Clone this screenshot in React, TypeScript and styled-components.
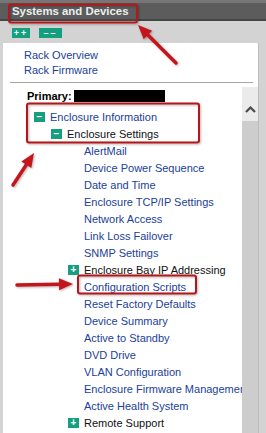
import React from "react";
import styled, { createGlobalStyle } from "styled-components";

const Global = createGlobalStyle`
  html, body { margin: 0; padding: 0; }
  body {
    width: 266px; height: 433px; overflow: hidden;
    background: #d3d3d3;
    font-family: "Liberation Sans", Arial, sans-serif;
  }
`;

const Page = styled.div`
  position: relative;
  width: 266px;
  height: 433px;
  overflow: hidden;
  display: flex;
  flex-direction: column;
  background: #d3d3d3;
`;

const Header = styled.div`
  height: 16px;
  border-top: 3px solid #767676;
  border-bottom: 2px solid #454545;
  background: #5c5c5c;
  display: flex;
  align-items: center;
  padding-left: 12px;
  color: #ededed;
  font-weight: bold;
  font-size: 11.4px;
`;

const Toolbar = styled.div`
  height: 22px;
  box-sizing: border-box;
  padding: 7px 0 0 12px;
  display: flex;
  gap: 9px;
  align-items: flex-start;
`;

const ToolButton = styled.div<{ $w: number }>`
  width: ${(p) => p.$w}px;
  height: 10px;
  background: #14a07f;
  color: #fff;
  font-size: 9px;
  font-weight: bold;
  line-height: 10px;
  text-align: center;
  letter-spacing: 2px;
`;

const Panel = styled.div`
  flex: 1;
  margin-left: 3px;
  width: 255px;
  background: #fff;
  border-right: 1px solid #bcbcbc;
  display: flex;
  flex-direction: column;
  min-height: 0;
`;

const TopLinks = styled.div`
  padding: 5px 0 0 21px;
  display: flex;
  flex-direction: column;
`;

const Link = styled.div`
  font-size: 11px;
  line-height: 15px;
  height: 15px;
  color: #21419a;
`;

const Separator = styled.div`
  height: 1px;
  background: #a6a6a6;
  margin: 4px 5px 0 7px;
`;

const TreeArea = styled.div`
  margin-top: 4px;
  flex: 1;
  display: flex;
  min-height: 0;
`;

const Tree = styled.div`
  flex: 1;
  overflow: hidden;
  white-space: nowrap;
  padding-left: 24px;
`;

const PrimaryRow = styled.div`
  height: 17px;
  display: flex;
  align-items: center;
  font-size: 11px;
  font-weight: bold;
  color: #000;
  margin-bottom: 4px;
`;

const Redacted = styled.span`
  display: inline-block;
  width: 91px;
  height: 12px;
  background: #000;
  margin-left: 2px;
`;

const Row = styled.div<{ $level: number }>`
  height: 17px;
  display: flex;
  align-items: center;
  padding-left: ${(p) => 7 + p.$level * 17}px;
  font-size: 11px;
`;

const Toggle = styled.span`
  width: 11px;
  height: 10px;
  background: #14a07f;
  color: #fff;
  font-size: 10px;
  font-weight: bold;
  line-height: 10px;
  text-align: center;
  margin-right: 5px;
  flex: none;
`;

const Spacer = styled.span`
  width: 16px;
  flex: none;
`;

const Label = styled.span<{ $dark?: boolean }>`
  color: ${(p) => (p.$dark ? "#111" : "#21419a")};
`;

const Scrollbar = styled.div`
  width: 16px;
  display: flex;
  flex-direction: column;
`;

const ScrollButton = styled.div`
  height: 34px;
  background: #ebebeb;
  display: flex;
  justify-content: center;
  padding-top: 19px;
  box-sizing: border-box;
`;

const ScrollThumb = styled.div`
  flex: 1;
  background: #cdcdcd;
`;

const Annotations = styled.svg`
  position: absolute;
  left: 0;
  top: 0;
  pointer-events: none;
`;

type Item = { label: string; level: number; toggle?: "+" | "−"; dark?: boolean };

const items: Item[] = [
  { label: "Enclosure Information", level: 0, toggle: "−" },
  { label: "Enclosure Settings", level: 1, toggle: "−", dark: true },
  { label: "AlertMail", level: 2 },
  { label: "Device Power Sequence", level: 2 },
  { label: "Date and Time", level: 2 },
  { label: "Enclosure TCP/IP Settings", level: 2 },
  { label: "Network Access", level: 2 },
  { label: "Link Loss Failover", level: 2 },
  { label: "SNMP Settings", level: 2 },
  { label: "Enclosure Bay IP Addressing", level: 2, toggle: "+", dark: true },
  { label: "Configuration Scripts", level: 2 },
  { label: "Reset Factory Defaults", level: 2 },
  { label: "Device Summary", level: 2 },
  { label: "Active to Standby", level: 2 },
  { label: "DVD Drive", level: 2 },
  { label: "VLAN Configuration", level: 2 },
  { label: "Enclosure Firmware Management", level: 2 },
  { label: "Active Health System", level: 2 },
  { label: "Remote Support", level: 2, toggle: "+", dark: true },
];

function Arrow({ x1, y1, x2, y2 }: { x1: number; y1: number; x2: number; y2: number }) {
  const dx = x2 - x1;
  const dy = y2 - y1;
  const len = Math.hypot(dx, dy);
  const ux = dx / len;
  const uy = dy / len;
  const hl = 14;
  const hw = 6;
  const bx = x2 - ux * hl;
  const by = y2 - uy * hl;
  const px = -uy;
  const py = ux;
  return (
    <g>
      <line x1={x1} y1={y1} x2={bx} y2={by} stroke="#c3161c" strokeWidth={3.5} strokeLinecap="round" />
      <polygon
        points={`${x2},${y2} ${bx + px * hw},${by + py * hw} ${bx - px * hw},${by - py * hw}`}
        fill="#c3161c"
      />
    </g>
  );
}

export default function App() {
  return (
    <>
      <Global />
      <Page>
        <Header>Systems and Devices</Header>
        <Toolbar>
          <ToolButton $w={18}>++</ToolButton>
          <ToolButton $w={23}>––</ToolButton>
        </Toolbar>
        <Panel>
          <TopLinks>
            <Link>Rack Overview</Link>
            <Link>Rack Firmware</Link>
          </TopLinks>
          <Separator />
          <TreeArea>
            <Tree>
              <PrimaryRow>
                Primary:<Redacted />
              </PrimaryRow>
              {items.map((it) => (
                <Row key={it.label} $level={it.level + (it.toggle ? 0 : 0)}>
                  {it.toggle ? <Toggle>{it.toggle === "+" ? "+" : "−"}</Toggle> : <Spacer />}
                  <Label $dark={it.dark}>{it.label}</Label>
                </Row>
              ))}
            </Tree>
            <Scrollbar>
              <ScrollButton>
                <svg width="11" height="7" viewBox="0 0 11 7">
                  <path d="M1 6 L5.5 1.5 L10 6" fill="none" stroke="#4a4a4a" strokeWidth="2.2" />
                </svg>
              </ScrollButton>
              <ScrollThumb />
            </Scrollbar>
          </TreeArea>
        </Panel>
        <Annotations width={266} height={433} viewBox="0 0 266 433">
          <defs>
            <filter id="sh" x="-20%" y="-20%" width="140%" height="140%">
              <feDropShadow dx="1" dy="1" stdDeviation="1.2" floodColor="#000" floodOpacity="0.3" />
            </filter>
          </defs>
          <g filter="url(#sh)" fill="none" stroke="#b3161c" strokeWidth={2}>
            <rect x={9} y={4.5} width={128} height={18} rx={2} />
            <rect x={27} y={103.5} width={172} height={39} rx={2} />
            <rect x={78} y={275.5} width={118} height={18} rx={2} />
          </g>
          <g filter="url(#sh)">
            <Arrow x1={176} y1={63} x2={138} y2={25} />
            <Arrow x1={13} y1={185} x2={34} y2={153} />
            <Arrow x1={17} y1={285} x2={73} y2={284} />
          </g>
        </Annotations>
      </Page>
    </>
  );
}
